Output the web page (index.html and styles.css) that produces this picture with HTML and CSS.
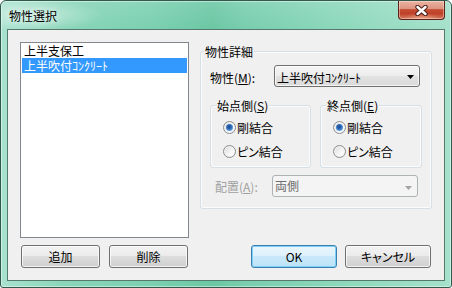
FILE: index.html
```html
<!DOCTYPE html>
<html lang="ja">
<head>
    <meta charset="UTF-8">
    <title>物性選択</title>
    <link rel="stylesheet" href="styles.css">
</head>
<body>
    <div class="window">
        <div class="titlebar">
            <span class="title">物性選択</span>
            <div class="close">
                <svg width="13" height="11" viewBox="0 0 13 11">
                    <path d="M2.5 2 L10.5 9 M10.5 2 L2.5 9" stroke="#4a2019" stroke-width="4.4" stroke-linecap="round"/>
                    <path d="M2.5 2 L10.5 9 M10.5 2 L2.5 9" stroke="#fff" stroke-width="2.4" stroke-linecap="round"/>
                </svg>
            </div>
        </div>

        <div class="client">
            <!-- left side: list of properties -->
            <div class="left-col">
                <ul class="listbox">
                    <li>上半支保工</li>
                    <li class="selected">上半吹付ｺﾝｸﾘｰﾄ</li>
                </ul>
                <div class="btn-row">
                    <div class="btn">追加</div>
                    <div class="btn">削除</div>
                </div>
            </div>

            <!-- right side: details -->
            <div class="right-col">
                <div class="group main">
                    <span class="group-title">物性詳細</span>
                    <div class="prop-row">
                        <span class="prop-label">物性(<u>M</u>):</span>
                        <div class="combo">
                            <span>上半吹付ｺﾝｸﾘｰﾄ</span>
                            <svg class="arrow" width="7" height="4" viewBox="0 0 7 4"><path d="M0 0h7L3.5 4z" fill="#000"/></svg>
                        </div>
                    </div>
                    <div class="sub-groups">
                        <div class="group sub">
                            <span class="group-title">始点側(<u>S</u>)</span>
                            <div class="radio checked"><span class="mark"></span>剛結合</div>
                            <div class="radio"><span class="mark"></span>ピン結合</div>
                        </div>
                        <div class="group sub">
                            <span class="group-title">終点側(<u>E</u>)</span>
                            <div class="radio checked"><span class="mark"></span>剛結合</div>
                            <div class="radio"><span class="mark"></span>ピン結合</div>
                        </div>
                    </div>
                    <div class="place-row">
                        <span class="place-label">配置(<u>A</u>):</span>
                        <div class="combo disabled">
                            <span>両側</span>
                            <svg class="arrow" width="7" height="4" viewBox="0 0 7 4"><path d="M0 0h7L3.5 4z" fill="#a3a3a3"/></svg>
                        </div>
                    </div>
                </div>
                <div class="btn-row right">
                    <div class="btn wide default">OK</div>
                    <div class="btn wide">キャンセル</div>
                </div>
            </div>
        </div>
    </div>
</body>
</html>
```

FILE: styles.css
```css
* {
    box-sizing: border-box;
}
body {
    margin: 0;
    font-family: "Noto Sans CJK JP", sans-serif;
    font-size: 12px;
    line-height: 15px;
    font-feature-settings: "palt";
    color: #000;
}
.window {
    width: 452px;
    height: 288px;
    border: 1px solid #2f5a4c;
    border-radius: 6px 6px 3px 3px;
    padding: 0 6px 6px;
    display: flex;
    flex-direction: column;
    background:
        radial-gradient(ellipse 70px 16px at 32px 14px, rgba(255, 255, 255, 0.45), transparent),
        linear-gradient(rgba(255, 255, 255, 0.12), transparent 28px),
        linear-gradient(to right, #a8e2ce 0%, #8ad6ba 14%, #7ad0b0 34%, #6bc7a4 47%, #78ceae 54%, #8fd9bd 78%, #a5e1cb 100%);
    box-shadow: inset 0 0 0 1px rgba(255, 255, 255, 0.45);
}
.titlebar {
    height: 28px;
    display: flex;
    justify-content: space-between;
    align-items: flex-start;
}
.title {
    margin: 7px 0 0 2px;
    text-shadow: 0 0 6px rgba(255, 255, 255, 0.9);
}
.close {
    width: 47px;
    height: 19px;
    border: 1px solid #5c2219;
    border-top: none;
    border-radius: 0 0 4px 4px;
    display: flex;
    justify-content: center;
    align-items: center;
    background:
        radial-gradient(ellipse 18px 6px at 50% 100%, rgba(255, 200, 170, 0.6), transparent),
        linear-gradient(#ebb4a3 0%, #dd9480 42%, #c54c33 48%, #bf4129 70%, #d27a5f 100%);
    box-shadow: inset 0 0 0 1px rgba(255, 230, 220, 0.45);
}
.client {
    flex: 1;
    border: 1px solid #557a6d;
    background: #f0f0f0;
    padding: 12px;
    display: flex;
    gap: 11px;
}

/* list side */
.left-col {
    width: 169px;
    display: flex;
    flex-direction: column;
    gap: 7px;
}
.listbox {
    flex: 1;
    margin: 0;
    padding: 0;
    list-style: none;
    background: #fff;
    border: 1px solid #828790;
}
.listbox li {
    height: 15px;
    margin: 0 1px;
    padding-left: 2px;
    white-space: nowrap;
}
.listbox li.selected {
    background: #3399ff;
    color: #fff;
}

/* buttons */
.btn-row {
    display: flex;
    gap: 9px;
    padding-left: 1px;
}
.btn-row.right {
    justify-content: flex-end;
    gap: 8px;
    padding: 0 1px 0 0;
}
.btn {
    width: 79px;
    height: 23px;
    border: 1px solid #707070;
    border-radius: 3px;
    display: flex;
    justify-content: center;
    align-items: center;
    background: linear-gradient(#f2f2f2 0%, #ebebeb 49%, #dddddd 50%, #cfcfcf 100%);
    box-shadow: inset 0 0 0 1px rgba(255, 255, 255, 0.75);
}
.btn.wide {
    width: 86px;
}
.btn.default {
    border-color: #3c7fb1;
    background: linear-gradient(#eaf6fd 0%, #dcf1fc 49%, #c9e9fa 50%, #bde2f6 100%);
    box-shadow: inset 0 0 0 1px #7fd0f7;
}

/* detail side */
.right-col {
    flex: 1;
    display: flex;
    flex-direction: column;
    justify-content: space-between;
}
.group {
    border: 1px solid #d5dfe5;
    border-radius: 3px;
    box-shadow: inset 0 0 0 1px #fbfcfd;
}
.group.main {
    margin-top: 9px;
    padding-bottom: 11px;
}
.group-title {
    display: block;
    width: fit-content;
    height: 15px;
    margin: -8px 0 0 3px;
    padding: 0 1px;
    background: #f0f0f0;
}
.prop-row {
    display: flex;
    margin-top: 6px;
    padding-left: 9px;
}
.prop-label {
    width: 64px;
    margin-top: 5px;
}
.combo {
    width: 146px;
    height: 22px;
    border: 1px solid #707070;
    border-radius: 3px;
    padding: 4px 5px 0 2px;
    display: flex;
    justify-content: space-between;
    background: linear-gradient(#f5f5f5, #ececec 50%, #e2e2e2 51%, #dadada);
    box-shadow: inset 0 0 0 1px rgba(255, 255, 255, 0.7);
}
.combo .arrow {
    margin-top: 5px;
}
.combo.disabled {
    border-color: #adb2b5;
    background: #f4f4f4;
    box-shadow: none;
    color: #6d6d6d;
    padding-top: 2px;
}
.combo.disabled .arrow {
    margin-top: 8px;
}
.sub-groups {
    display: flex;
    gap: 9px;
    margin: 18px 0 0 9px;
}
.group.sub {
    width: 101px;
    padding-bottom: 8px;
}
.group.sub:last-child {
    width: 102px;
}
.group.sub .group-title {
    margin-left: 5px;
}
.radio {
    height: 16px;
    margin: 8px 0 0 12px;
    display: flex;
    align-items: center;
    gap: 1px;
}
.group-title + .radio {
    margin-top: 6px;
}
.radio .mark {
    width: 13px;
    height: 13px;
    border: 1px solid #8a8d90;
    border-radius: 50%;
    display: flex;
    justify-content: center;
    align-items: center;
    background: linear-gradient(135deg, #d8d8d8, #f7f7f7 60%, #fff);
    box-shadow: inset 0 0 0 1px #f3f3f3;
}
.radio.checked .mark::after {
    content: "";
    width: 7px;
    height: 7px;
    border-radius: 50%;
    background: radial-gradient(circle at 45% 40%, #1c4a92 0, #2c63b0 35%, #5ea3e3 70%, #a9dcfa 100%);
}
.place-row {
    display: flex;
    align-items: center;
    margin-top: 7px;
    padding-left: 14px;
}
.place-label {
    width: 57px;
    color: #a0a0a0;
}
```
